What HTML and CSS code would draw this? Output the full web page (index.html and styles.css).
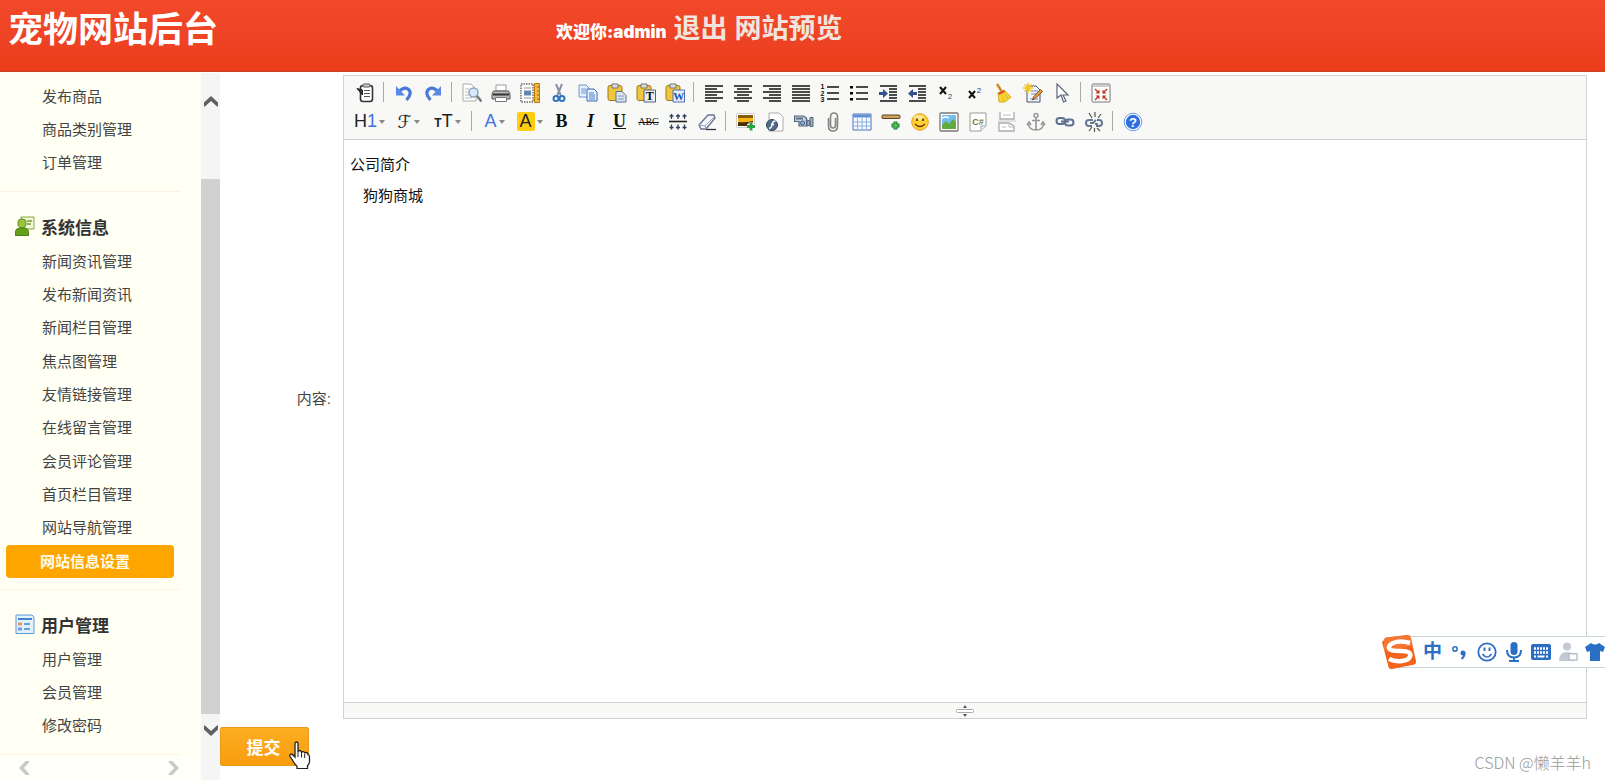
FILE: index.html
```html
<!DOCTYPE html>
<html lang="zh-CN">
<head>
<meta charset="utf-8">
<title>宠物网站后台</title>
<link rel="stylesheet" href="styles.css">
</head>
<body>
<header class="topbar">
  <h1 class="brand">宠物网站后台</h1>
  <div class="account">
    <span class="welcome">欢迎你:admin</span>
    <a class="toplink" href="#">退出</a>
    <a class="toplink" href="#">网站预览</a>
  </div>
</header>

<div class="shell">
  <aside class="sidebar">
    <nav class="menu">
      <section class="group">
        <ul class="items">
          <li><a href="#">发布商品</a></li>
          <li><a href="#">商品类别管理</a></li>
          <li><a href="#">订单管理</a></li>
        </ul>
      </section>
      <section class="group">
        <h2 class="group-title">
          <svg class="icon" viewBox="0 0 20 20"><path d="M6 1h13v12h-7l-6-3z" fill="#f2f8dc" stroke="#88aa38"/><path d="M12 5h5M12 8h4" stroke="#6f9a28" stroke-width="1.5"/><path d="M3 6q0-3 4-3t4 3v3q-1 3-4 3T3 9z" fill="#9bc344" stroke="#5f8f1c"/><path d="M.5 19.500v-4q0-3 4-3.500h5q4 .5 4 3.500v4z" fill="#659f1c" stroke="#4d8112"/></svg>
          系统信息
        </h2>
        <ul class="items">
          <li><a href="#">新闻资讯管理</a></li>
          <li><a href="#">发布新闻资讯</a></li>
          <li><a href="#">新闻栏目管理</a></li>
          <li><a href="#">焦点图管理</a></li>
          <li><a href="#">友情链接管理</a></li>
          <li><a href="#">在线留言管理</a></li>
          <li><a href="#">会员评论管理</a></li>
          <li><a href="#">首页栏目管理</a></li>
          <li><a href="#">网站导航管理</a></li>
          <li><a class="current" href="#" aria-current="page">网站信息设置</a></li>
        </ul>
      </section>
      <section class="group">
        <h2 class="group-title">
          <svg class="icon" viewBox="0 0 20 20"><path d="M1 1h16l2 2v16.500H1z" fill="#e3f1fc" stroke="#5a98d4" stroke-linejoin="round"/><path d="M3 5h14" stroke="#3f86cf" stroke-width="2"/><path d="M3 8.500h4v3H3z" fill="#f2925a"/><path d="M3 13.500h4v3H3z" fill="#6f9fe0"/><path d="M9 10h6M9 15h6" stroke="#3f86cf" stroke-width="1.500"/></svg>
          用户管理
        </h2>
        <ul class="items">
          <li><a href="#">用户管理</a></li>
          <li><a href="#">会员管理</a></li>
          <li><a href="#">修改密码</a></li>
        </ul>
      </section>
    </nav>
    <div class="vscroll">
      <button class="scroll-btn up" type="button" aria-label="向上滚动"><svg viewBox="0 0 16 12"><path d="M1 9.500v-3L8 0l7 6.500v3q0 2-1.500.5L8 5l-5.500 5Q1 11.500 1 9.500z"/></svg></button>
      <div class="thumb"></div>
      <button class="scroll-btn down" type="button" aria-label="向下滚动"><svg viewBox="0 0 16 12"><path d="M1 2.500v3L8 12l7-6.500v-3Q15 .5 13.500 2L8 7 2.500 2Q1 .5 1 2.500z"/></svg></button>
    </div>
    <div class="hscroll">
      <button class="scroll-btn pale" type="button" aria-label="向左滚动"><svg viewBox="0 0 12 16"><path d="M9.500 1h-3L0 8l6.500 7h3q2 0 .5-1.500L5 8l5-5.500Q11.500 1 9.500 1z"/></svg></button>
      <button class="scroll-btn pale" type="button" aria-label="向右滚动"><svg viewBox="0 0 12 16"><path d="M2.500 1h3L12 8l-6.500 7h-3Q.5 15 2 13.500L7 8 2 2.500Q.5 1 2.500 1z"/></svg></button>
    </div>
  </aside>

  <main class="content">
    <form class="form">
      <div class="row">
        <span class="label" id="content-label">内容:</span>
        <div class="editor">
          <div class="toolbar">
            <div class="tools">
              <button type="button" aria-label="源代码"><svg class="icon" viewBox="0 0 20 20"><rect x="5.500" y="2.500" width="12" height="16" rx="2.500" fill="#fff" stroke="#333" stroke-width="1.600"/><rect x="8" y="1" width="7" height="3" rx="1" fill="#ccc" stroke="#555"/><path d="M9 7.500h6M9 10.500h6M9 13.500h6" stroke="#555"/><path d="M2 5.500 7.500 12V7z" fill="#333" stroke="#222"/></svg></button>
              <i class="sep"></i>
              <button type="button" aria-label="后退"><svg class="icon" viewBox="0 0 20 20"><path d="M5 8.500q5-5 9-2.500 5 4-1.500 11" fill="none" stroke="#4a78d8" stroke-width="3.200"/><path d="M2 3v9.500h9z" fill="#5a88e6"/></svg></button>
              <button type="button" aria-label="前进"><svg class="icon" viewBox="0 0 20 20"><path d="M15 8.500Q10 3.500 6 6q-5 4 1.500 11" fill="none" stroke="#4a78d8" stroke-width="3.200"/><path d="M18 3v9.500H9z" fill="#5a88e6"/></svg></button>
              <i class="sep"></i>
              <button type="button" aria-label="预览"><svg class="icon" viewBox="0 0 20 20"><path d="M1 1h8l5 5v12H1z" fill="#fff" stroke="#aaa"/><path d="M3 6h4M3 9h3M3 12h4M3 15h7" stroke="#bbb"/><circle cx="11.500" cy="9.500" r="4.500" fill="#d7e9fa" stroke="#8ca3bd" stroke-width="1.500"/><path d="m15 13 4.500 5.500" stroke="#777" stroke-width="2.500"/></svg></button>
              <button type="button" aria-label="打印"><svg class="icon" viewBox="0 0 20 20"><path d="M5 2h10v6H5z" fill="#fff" stroke="#999"/><path d="M2.500 8h15l1.500 3v5H1v-5z" fill="#bbb" stroke="#555"/><path d="M2 11.500h16" stroke="#333" stroke-width="2"/><path d="M4.500 14.500h11v4h-11z" fill="#fff" stroke="#777"/></svg></button>
              <button type="button" aria-label="插入模板"><svg class="icon" viewBox="0 0 20 20"><path d="M1 1h12v18H1z" fill="#fff" stroke="#222" stroke-dasharray="1.500 1"/><path d="M4 5h7M4 15h7" stroke="#999"/><path d="M4 7.500h7v5H4z" fill="#5f86b4"/><path d="M14.500.5h5v19h-5z" fill="#f5b93c" stroke="#b97915"/><path d="M17 4h2M17 8h2M17 12h2M17 16h2" stroke="#946015"/></svg></button>
              <button type="button" aria-label="剪切"><svg class="icon" viewBox="0 0 20 20"><path d="m7 1 5 12M13 1 8 13" stroke="#8494a8" stroke-width="2"/><circle cx="7" cy="15.500" r="2.500" fill="none" stroke="#3474bd" stroke-width="2"/><circle cx="13" cy="15.500" r="2.500" fill="none" stroke="#3474bd" stroke-width="2"/></svg></button>
              <button type="button" aria-label="复制"><svg class="icon" viewBox="0 0 20 20"><path d="M1 2h7l3 3v9H1z" fill="#e7f1ff" stroke="#6f94c8"/><path d="M3 6h5M3 8h5M3 10h5" stroke="#719bd2"/><path d="M9 6h7l3 3v9H9z" fill="#e7f1ff" stroke="#3c68ae"/><path d="M11 10h5M11 12h6M11 14h6M11 16h6" stroke="#4f80c4"/></svg></button>
              <button type="button" aria-label="粘贴"><svg class="icon" viewBox="0 0 20 20"><rect x="1" y="2.500" width="14" height="15" rx="2" fill="#f2c63c" stroke="#9d7a1b"/><path d="M5 1h6v4H5z" fill="#ddd" stroke="#777"/><path d="M9 8.500h6l4 4V19H9z" fill="#dbe5f1" stroke="#5c708c"/><path d="M11 13h6M11 16h6" stroke="#8395ac"/></svg></button>
              <button type="button" aria-label="粘贴为无格式文本"><svg class="icon" viewBox="0 0 20 20"><rect x="1" y="2.500" width="14" height="15" rx="2" fill="#f2c63c" stroke="#9d7a1b"/><path d="M5 1h6v4H5z" fill="#ddd" stroke="#777"/><path d="M8 7h11.500v12H8z" fill="#e9eef5" stroke="#56657b"/><text class="g-serif" x="13.800" y="17" font-size="12" fill="#111">T</text></svg></button>
              <button type="button" aria-label="从Word粘贴"><svg class="icon" viewBox="0 0 20 20"><rect x="1" y="2.500" width="14" height="15" rx="2" fill="#f2c63c" stroke="#9d7a1b"/><path d="M5 1h6v4H5z" fill="#ddd" stroke="#777"/><path d="M8 7h11.500v12H8z" fill="#e3edff" stroke="#4c73b8"/><text class="g-serif" x="13.800" y="16.500" font-size="11" fill="#2456b4">W</text></svg></button>
              <i class="sep"></i>
              <button type="button" aria-label="左对齐"><svg class="icon" viewBox="0 0 20 20"><path class="ln" d="M1 3h18M1 6h12M1 9h18M1 12h12M1 15h18M1 18h12"/></svg></button>
              <button type="button" aria-label="居中"><svg class="icon" viewBox="0 0 20 20"><path class="ln" d="M1 3h18M4 6h12M1 9h18M4 12h12M1 15h18M4 18h12"/></svg></button>
              <button type="button" aria-label="右对齐"><svg class="icon" viewBox="0 0 20 20"><path class="ln" d="M1 3h18M7 6h12M1 9h18M7 12h12M1 15h18M7 18h12"/></svg></button>
              <button type="button" aria-label="两端对齐"><svg class="icon" viewBox="0 0 20 20"><path class="ln" d="M1 3h18M1 6h18M1 9h18M1 12h18M1 15h18M1 18h18"/></svg></button>
              <button type="button" aria-label="编号"><svg class="icon" viewBox="0 0 20 20"><path class="ln" d="M7 4h12M7 10h12M7 16h12"/><g class="g-sans" font-size="7" fill="#111"><text x="2.500" y="6">1</text><text x="2.500" y="12.500">2</text><text x="2.500" y="19">3</text></g></svg></button>
              <button type="button" aria-label="项目符号"><svg class="icon" viewBox="0 0 20 20"><path class="ln" d="M7 4h12M7 10h12M7 16h12"/><path d="M1 3h3v2.500H1zM1 9h3v2.500H1zM1 15h3v2.500H1z"/></svg></button>
              <button type="button" aria-label="增加缩进"><svg class="icon" viewBox="0 0 20 20"><path class="ln" d="M2 3h17M11 6h8M11 9h8M11 12h8M11 15h8M2 18h17"/><path d="M1 9h4V6l5 4.500L5 15v-3H1z" fill="#33518f"/></svg></button>
              <button type="button" aria-label="减少缩进"><svg class="icon" viewBox="0 0 20 20"><path class="ln" d="M2 3h17M11 6h8M11 9h8M11 12h8M11 15h8M2 18h17"/><path d="M10 9H6V6l-5 4.500L6 15v-3h4z" fill="#33518f"/></svg></button>
              <button type="button" aria-label="下标"><svg class="icon" viewBox="0 0 20 20"><path d="m4 4 6 7M10 4l-6 7" stroke="#111" stroke-width="2"/><text class="g-thin" x="14" y="16" font-size="8" fill="#333f70">2</text></svg></button>
              <button type="button" aria-label="上标"><svg class="icon" viewBox="0 0 20 20"><path d="m4 8 6 7M10 8l-6 7" stroke="#111" stroke-width="2"/><text class="g-thin" x="14" y="10" font-size="8" fill="#333f70">2</text></svg></button>
              <button type="button" aria-label="一键排版"><svg class="icon" viewBox="0 0 20 20"><path d="m3 1 5 8" stroke="#c98e25" stroke-width="2.500"/><path d="m4 10 6-3 7 7-6 5H5z" fill="#f7d432" stroke="#d8b02a"/><path d="m4 10 6-3 1 2-6 3z" fill="#dd4d2b"/><path d="m8 12 2 6M11 11l3 5" stroke="#e0ba2a"/></svg></button>
              <button type="button" aria-label="清理HTML"><svg class="icon" viewBox="0 0 20 20"><path d="M4 3h9l4 4v12H4z" fill="#f4f7ff" stroke="#44516b"/><path d="M8 8h7M8 11h7M7 16h8" stroke="#6c86b2"/><path d="m19.500 8.500-8 7.500-2 1 1-3 7-7.500z" fill="#f2a144" stroke="#7d4b1c"/><path d="M5 0v10M0 5h10M1.500 1.500l7 7M8.500 1.500l-7 7" stroke="#f5c51f" stroke-width="1.500"/></svg></button>
              <button type="button" aria-label="全选"><svg class="icon" viewBox="0 0 20 20"><path d="M5 1v14l4-3 2.500 7 2.500-1-3-6h5z" fill="#fff" stroke="#5b6678" stroke-width="1.200"/></svg></button>
              <i class="sep"></i>
              <button type="button" aria-label="全屏显示"><svg class="icon" viewBox="0 0 20 20"><rect x="1" y="1" width="18" height="18" rx="1" fill="#fff" stroke="#777"/><path d="M2 3h16" stroke="#ccc" stroke-width="2"/><path d="m4 6 4 4M16 6l-4 4M4 17l4-4M16 17l-4-4" stroke="#c0392b" stroke-width="1.500"/><path d="M8.500 10.500h-4l4-4zM11.500 10.500h4l-4-4zM8.500 12.500h-4l4 4zM11.500 12.500h4l-4 4z" fill="#c0392b"/></svg></button>
            </div>
            <div class="tools">
              <button class="drop wide heading" type="button" aria-label="段落"><span>H<b class="blue">1</b></span></button>
              <button class="drop wide script" type="button" aria-label="字体"><span>ℱ</span></button>
              <button class="drop wide size" type="button" aria-label="文字大小"><span><small>T</small>T</span></button>
              <i class="sep"></i>
              <button class="drop blue" type="button" aria-label="文字颜色"><span>A</span></button>
              <button class="drop mark" type="button" aria-label="文字背景"><span>A</span></button>
              <button class="serif" type="button" aria-label="粗体"><b>B</b></button>
              <button class="serif" type="button" aria-label="斜体"><em>I</em></button>
              <button class="serif" type="button" aria-label="下划线"><u>U</u></button>
              <button class="strike" type="button" aria-label="删除线"><s>ABC</s></button>
              <button type="button" aria-label="行距"><svg class="icon" viewBox="0 0 20 20"><path d="M1 9.500h18" stroke="#222" stroke-width="1.600"/><path d="M3.500 2v5M10 2v5M16.500 2v5M3.500 12.500v5M10 12.500v5M16.500 12.500v5M1.500 4h4M8 4h4M14.500 4h4M1.500 15.500h4M8 15.500h4M14.500 15.500h4" stroke="#313b5e" stroke-width="1.300"/></svg></button>
              <button type="button" aria-label="删除格式"><svg class="icon" viewBox="0 0 20 20"><path d="M2 13 11 3h6l1 3-9 11H4z" fill="#f6f7ff" stroke="#6a7290" stroke-width="1.300"/><path d="m2 13 6 1 9-9M8 14l1 3" fill="none" stroke="#98a0bb"/><path d="M9 17.500h10" stroke="#333" stroke-width="1.300"/></svg></button>
              <i class="sep"></i>
              <button type="button" aria-label="图片"><svg class="icon" viewBox="0 0 20 20"><rect x=".5" y="1.500" width="18" height="14" rx="1" fill="#fff" stroke="#ccc"/><path d="M2 3h15v11H2z" fill="#f7b518"/><path d="M2 3h15v3H2z" fill="#8a5a0c"/><path d="M2 10q7 1 15-1v5H2z" fill="#4a2c08"/><path d="M15 10.500v8M11 14.500h8" stroke="#fff" stroke-width="5"/><path d="M15 10.500v8M11 14.500h8" stroke="#2fa047" stroke-width="3"/></svg></button>
              <button type="button" aria-label="Flash"><svg class="icon" viewBox="0 0 20 20"><path d="M4 1h10l4 4v14H4z" fill="#fff" stroke="#aaa"/><circle cx="7" cy="13" r="5.500" fill="#526b88" stroke="#33485f"/><path d="M10.500 9q-3 0-3.500 4-.5 3-3 3.500M6 12.500h3" fill="none" stroke="#fff" stroke-width="1.500"/></svg></button>
              <button type="button" aria-label="视音频"><svg class="icon" viewBox="0 0 20 20"><path d="M.5 4h9l3 2v8H5V9.500H.5z" fill="#c5d1dd" stroke="#52657b" stroke-width="1.200"/><path d="M2 6.500h7" stroke="#5d7188" stroke-width="2"/><circle cx="8.500" cy="11" r="2" fill="#7ec0ee" stroke="#40536a"/><path d="m13 8 3 1v4l-3 1zM16 5.500h3v9h-3z" fill="#9fb0c0" stroke="#52657b"/></svg></button>
              <button type="button" aria-label="插入文件"><svg class="icon" viewBox="0 0 20 20"><path d="M5.500 6v8q0 5 4.500 5t4.500-5V5q0-4-3.500-4T7.500 5v8q0 3 2.500 3t2.500-3V6" fill="none" stroke="#858585" stroke-width="1.600"/></svg></button>
              <button type="button" aria-label="表格"><svg class="icon" viewBox="0 0 20 20"><path d="M1 2h18v16H1z" fill="#f6faff" stroke="#4a73bb"/><path d="M1.500 2.500h17v3h-17z" fill="#628fd4"/><path d="M1 10h18M1 14h18M5.500 6v12M10 6v12M14.500 6v12" stroke="#8eb0e0"/></svg></button>
              <button type="button" aria-label="插入横线"><svg class="icon" viewBox="0 0 20 20"><rect x="1" y="3" width="18" height="3.500" rx="1" fill="#d0a260" stroke="#5b4120"/><path d="M14.500 9.500v8M10.500 13.500h8" stroke="#257e30" stroke-width="4"/><path d="M14.500 10.500v6M11.500 13.500h6" stroke="#55bd55" stroke-width="2"/></svg></button>
              <button type="button" aria-label="插入表情"><svg class="icon" viewBox="0 0 20 20"><circle cx="10" cy="10" r="8.300" fill="#ffcf35" stroke="#e6a02a"/><ellipse cx="9" cy="5.500" rx="5" ry="2.500" fill="#ffe98b"/><path d="M7 6.500v2.500M13 6.500v2.500" stroke="#5c3505" stroke-width="1.700"/><path d="M5 12q5 5 10 0" fill="none" stroke="#6e3b07" stroke-width="1.400"/></svg></button>
              <button type="button" aria-label="网络图片"><svg class="icon" viewBox="0 0 20 20"><rect x="1" y="1" width="18" height="18" rx="1" fill="#fff" stroke="#777" stroke-width="1.300"/><path d="M3 3h14v14H3z" fill="#75bdf0"/><path d="m3 13 4-4 3 3 4-5 3 3v7H3z" fill="#62a93e"/><path d="M3 6q4-2 7 0" stroke="#fff" fill="none" stroke-width="1.500"/></svg></button>
              <button type="button" aria-label="插入程序代码"><svg class="icon" viewBox="0 0 20 20"><path d="M2 1h16v13l-5 5H2z" fill="#fff" stroke="#999"/><path d="M18 14h-5v5" fill="#eee" stroke="#aaa"/><text class="g-sans" x="10" y="13" font-size="9" fill="#7e7641">C#</text></svg></button>
              <button type="button" aria-label="插入分页符"><svg class="icon" viewBox="0 0 20 20"><path d="M3 0v7h14V0M2 19v-8h10l5 3v5z" fill="#fff" stroke="#aaa" stroke-width="1.300"/><path d="M1 9h18" stroke="#ccc"/><path d="M12 11v4h5M6 3h8M5 15h4" fill="none" stroke="#bbb"/></svg></button>
              <button type="button" aria-label="锚点"><svg class="icon" viewBox="0 0 20 20"><circle cx="10" cy="3.500" r="2" fill="none" stroke="#999" stroke-width="1.500"/><path d="M10 6v12M6 8.500h8M2 11q1 7 8 7t8-7M1 13l2-3 2 3M15 13l2-3 2 3" fill="none" stroke="#999" stroke-width="1.700"/></svg></button>
              <button type="button" aria-label="超级链接"><svg class="icon" viewBox="0 0 20 20"><g fill="none" stroke="#5d7190" stroke-width="2"><rect x="1.500" y="6" width="8.500" height="6" rx="3"/><rect x="10" y="7.500" width="8.500" height="6" rx="3"/><path d="M6 9.500h8"/></g></svg></button>
              <button type="button" aria-label="取消超级链接"><svg class="icon" viewBox="0 0 20 20"><g fill="none" stroke="#657994" stroke-width="2"><path d="M9 8H5q-3 0-3 3t3 3h3M12 14h3q3 0 3-3t-3-3h-2M6 11h3l3-3M11 12h3"/></g><path d="m5 1 3 5M11 0v5M17 2l-3 4M5 19l3-4M10.500 20v-4M16 19l-3-3" stroke="#555" stroke-width="1.200"/></svg></button>
              <i class="sep"></i>
              <button type="button" aria-label="关于"><svg class="icon" viewBox="0 0 20 20"><circle cx="10" cy="10" r="8.800" fill="#fff" stroke="#6b9bea"/><circle cx="10" cy="10" r="7.200" fill="#2e6fe0"/><text class="g-sans" x="10" y="14.500" font-size="13" fill="#fff">?</text></svg></button>
            </div>
          </div>
          <div class="document" contenteditable="true" role="textbox" aria-multiline="true" aria-labelledby="content-label" spellcheck="false">
            <p>公司简介</p>
            <p class="indent">狗狗商城</p>
          </div>
          <div class="statusbar">
            <svg class="grip" viewBox="0 0 18 12"><path d="M9 0l2 3H7zM9 12l2-3H7z" fill="#555"/><rect x=".5" y="4.500" width="17" height="3" rx="1" fill="#fff" stroke="#aaa"/></svg>
          </div>
        </div>
      </div>
      <button class="submit" type="submit">提交</button>
    </form>
  </main>
</div>

<svg class="pointer" viewBox="0 0 22 28"><path d="M6 2.500q0-1.500 1.500-1.500T9 2.500V11q0-1.500 1.500-1.500T12.500 11v1q0-1.500 1.700-1.300 1.500.2 1.500 1.800 0-1.200 1.600-1 1.700.2 1.700 2.200 1.500 0 1.500 2v5q0 2-2 4v3H8v-2.500q-2-1.500-4-5.200L1 15.500q-.7-2 1-2.500 1.500 0 4 3z" fill="#fff" stroke="#222" stroke-width="1.300"/><path d="M9 11v5M12.500 12v4.500M15.700 13v4" stroke="#222"/></svg>

<div class="ime">
  <svg class="ime-logo" viewBox="0 0 36 36"><path d="M3 6q0-2 2-2.500L26 1q3-.3 3.700 2L35 27q.5 3-2.500 3.800L11 35q-3 .5-3.500-2L1 8z" fill="#f2641d"/><path d="M3 6q0-2 2-2.500L26 1q3-.3 3.700 2l2 9L3 17z" fill="#f98245" opacity=".6"/><path d="M29 9q-10-3-17 0-6 3-3 6.500 2 1.500 10 1.500 10-.5 10.500 4Q29 26 21 27q-7 1-13-2" fill="none" stroke="#fff" stroke-width="4.500"/></svg>
  <span class="ime-lang">中</span>
  <svg class="ime-icon" viewBox="0 0 20 20"><circle cx="5" cy="7" r="2.200" fill="none" stroke="#2a6fc4" stroke-width="1.500"/><circle cx="13" cy="11" r="2.500" fill="#2a6fc4"/><path d="M14.500 11q0 4-3 6" fill="none" stroke="#2a6fc4" stroke-width="2"/></svg>
  <svg class="ime-icon" viewBox="0 0 20 20"><circle cx="10" cy="10" r="8.700" fill="none" stroke="#2a6fc4" stroke-width="1.800"/><path d="M7.500 5.500V9M12.500 5.500V9" stroke="#2a6fc4" stroke-width="1.900"/><path d="M5.500 12q4.500 6 9 0" fill="none" stroke="#2a6fc4" stroke-width="1.600"/></svg>
  <svg class="ime-icon" viewBox="0 0 20 20"><rect x="6.500" y="0" width="7" height="13" rx="3.500" fill="#2a6fc4"/><path d="M3 8q0 7.500 7 7.500T17 8M10 16v3M5 19h10" fill="none" stroke="#2a6fc4" stroke-width="2"/></svg>
  <svg class="ime-icon" viewBox="0 0 20 20"><rect x="0" y="2" width="20" height="16" rx="2" fill="#2a6fc4"/><path d="M3 6.500h14M3 10.500h14" stroke="#fff" stroke-width="2.500" stroke-dasharray="2 1"/><path d="M3 14.500h2M6.500 14.500h7M15 14.500h2" stroke="#fff" stroke-width="2"/></svg>
  <svg class="ime-icon" viewBox="0 0 20 20"><circle cx="9" cy="4.500" r="4" fill="#c3c9d6"/><path d="M1 19q0-9 8-9 4 0 6 2v7z" fill="#c3c9d6"/><path d="M11 12q3-1 4 0 1-1 4 0v6q-3-.5-4 .5-1-1-4-.5z" fill="#fff" stroke="#b4bbc9" stroke-width="1.400"/></svg>
  <svg class="ime-icon" viewBox="0 0 20 20"><path d="M6 1q4 3 8 0l6 4-2 5-3-1v10H5V9l-3 1-2-5z" fill="#2a6fc4"/></svg>
</div>
<p class="watermark">CSDN @懒羊羊h</p>
</body>
</html>
```
FILE: styles.css
```css
* {
  box-sizing: border-box;
}

body {
  margin: 0;
  height: 100vh;
  display: flex;
  flex-direction: column;
  overflow: hidden;
  position: relative;
  background: #fff;
  color: #444;
  font-family: "Liberation Sans", "Noto Sans CJK SC", sans-serif;
  font-size: 15px;
}

button {
  margin: 0;
  padding: 0;
  border: 0;
  background: none;
  font-family: inherit;
  color: inherit;
}

a {
  color: inherit;
  text-decoration: none;
}

.icon {
  display: block;
  width: 20px;
  height: 20px;
}

/* Header */
.topbar {
  flex: none;
  display: grid;
  grid-template-columns: 548px 1fr;
  align-items: start;
  height: 72px;
  padding: 4px 8px 0;
  background: linear-gradient(#f2492b, #ee4224 60%, #eb3d18);
  border-bottom: 1px solid #c84426;
  color: #fff;
}

.brand {
  margin: 0;
  font-size: 35px;
  line-height: 52px;
  font-weight: bold;
}

.account {
  display: flex;
  align-items: baseline;
  gap: 7px;
  font-weight: bold;
  line-height: 50px;
}

.welcome {
  font-family: "Inter", "Noto Sans CJK SC", sans-serif;
  font-size: 17px;
  font-weight: 900;
}

.toplink {
  font-size: 27px;
  color: #f0e5de;
}

.shell {
  flex: 1;
  min-height: 0;
  display: flex;
}

/* Sidebar */
.sidebar {
  flex: none;
  width: 220px;
  display: grid;
  grid-template-columns: 1fr 19px;
  grid-template-rows: 1fr 24px;
  padding-top: 1px;
  background: #fffff3;
}

.menu {
  padding-top: 7px;
  overflow: hidden;
}

.group {
  width: 180px;
  padding: 0 6px 11px;
  border-bottom: 1px solid #fdf1e6;
}

.group-title {
  display: flex;
  align-items: center;
  gap: 6px;
  height: 38px;
  margin: 15px 0 0;
  padding-left: 9px;
  font-size: 17px;
  color: #333;
}

.items {
  margin: 0;
  padding: 0;
  list-style: none;
}

.items a {
  display: block;
  padding-left: 36px;
  line-height: 33px;
}

.items li:nth-child(3n) a {
  line-height: 34px;
}

.items .current {
  padding-left: 34px;
  border-radius: 4px;
  background: #ffa500;
  color: #fffbe8;
  font-weight: bold;
}

.vscroll {
  grid-row: 1 / 3;
  grid-column: 2;
  display: flex;
  flex-direction: column;
  align-items: center;
  padding: 23px 0 44px;
  background: #f5f5f5;
}

.scroll-btn {
  display: flex;
}

.scroll-btn svg {
  width: 16px;
  height: 12px;
  fill: #606060;
}

.thumb {
  flex: 1;
  width: 100%;
  margin: 71px 0 10px;
  background: #d1d1d1;
}

.hscroll {
  display: flex;
  justify-content: space-between;
  align-items: center;
  padding: 0 22px 0 19px;
  background: #fffffa;
}

.pale svg {
  width: 12px;
  height: 16px;
  fill: #cacaca;
}

/* Form */
.content {
  flex: 1;
  min-width: 0;
  padding: 3px 18px 14px 0;
}

.form {
  height: 100%;
  display: flex;
  flex-direction: column;
  align-items: flex-start;
  gap: 8px;
}

.row {
  flex: 1;
  min-height: 0;
  align-self: stretch;
  display: flex;
}

.label {
  flex: none;
  width: 123px;
  padding-right: 12px;
  align-self: center;
  text-align: right;
}

.submit {
  width: 89px;
  height: 39px;
  padding-right: 2px;
  border: 1px solid #e89a1a;
  border-radius: 2px;
  background: linear-gradient(#fcae22, #f99c0e);
  color: #fff;
  font-size: 17px;
  font-weight: bold;
}

/* Editor */
.editor {
  flex: 1;
  min-width: 0;
  display: flex;
  flex-direction: column;
  border: 1px solid #d2d2d2;
}

.toolbar {
  padding: 2px 6px 3px;
  background: #f8f9f6;
  border-bottom: 1px solid #d2d2d2;
}

.tools {
  display: flex;
  height: 29px;
}

.tools button {
  width: 29px;
  display: flex;
  align-items: center;
  justify-content: center;
}

.tools .icon {
  width: 20px;
  height: 20px;
}

.sep {
  width: 1px;
  height: 20px;
  margin: 4px 5px 4px 4px;
  background: #aaa;
}

.ln {
  stroke: #111;
  stroke-width: 1.6;
}

.g-serif,
.g-sans,
.g-thin {
  font-family: "Liberation Sans", sans-serif;
  font-weight: bold;
  text-anchor: middle;
}

.g-serif {
  font-family: "Liberation Serif", serif;
}

.g-thin {
  font-weight: normal;
}

.tools .drop {
  width: 35px;
  gap: 2px;
  color: #222;
  font-size: 18px;
}

.drop::after {
  content: "";
  border: 3px solid transparent;
  border-top: 4px solid #888;
  border-bottom: 0;
}

.tools .wide {
  width: 39px;
}

.tools .heading b {
  font-weight: normal;
}

.tools .blue {
  color: #4273dc;
}

.tools .script {
  font-family: "DejaVu Serif", "DejaVu Sans", serif;
}

.size small {
  font-size: 12px;
  font-weight: bold;
}

.mark span {
  width: 18px;
  border-radius: 2px;
  background: #ffcc10;
  line-height: 19px;
}

.serif {
  font-family: "Liberation Serif", serif;
  font-size: 18px;
  font-weight: bold;
  color: #111;
}

.strike {
  font-family: "Liberation Serif", serif;
  font-size: 10px;
  color: #111;
}

.document {
  flex: 1;
  min-height: 0;
  padding: 9px 6px;
  color: #111;
  line-height: 31px;
}

.document p {
  margin: 0;
}

.document .indent {
  padding-left: 13px;
}

.statusbar {
  display: flex;
  align-items: center;
  justify-content: center;
  height: 16px;
  border-top: 1px solid #d2d2d2;
  background: #f9f9f8;
}

.grip {
  width: 18px;
  height: 12px;
}

/* Overlays */
.pointer {
  position: absolute;
  left: 289px;
  bottom: 11px;
  width: 22px;
  height: 28px;
}

.ime {
  position: absolute;
  right: 0;
  bottom: 112px;
  display: flex;
  align-items: center;
  gap: 7px;
  height: 32px;
  background: #fff;
  border: 1px solid #c9d6de;
  border-right: 0;
}

.ime-logo {
  width: 36px;
  height: 36px;
  margin: 0 -1px 0 -14px;
}

.ime-lang {
  width: 20px;
  color: #2a6fc4;
  font-size: 19px;
  font-weight: bold;
  line-height: 30px;
}

.ime-icon {
  width: 20px;
  height: 20px;
}

.watermark {
  position: absolute;
  right: 14px;
  bottom: 6px;
  margin: 0;
  color: #999;
  font-family: "Noto Sans CJK SC", sans-serif;
  font-size: 16px;
  font-weight: 300;
  line-height: 24px;
}
```
